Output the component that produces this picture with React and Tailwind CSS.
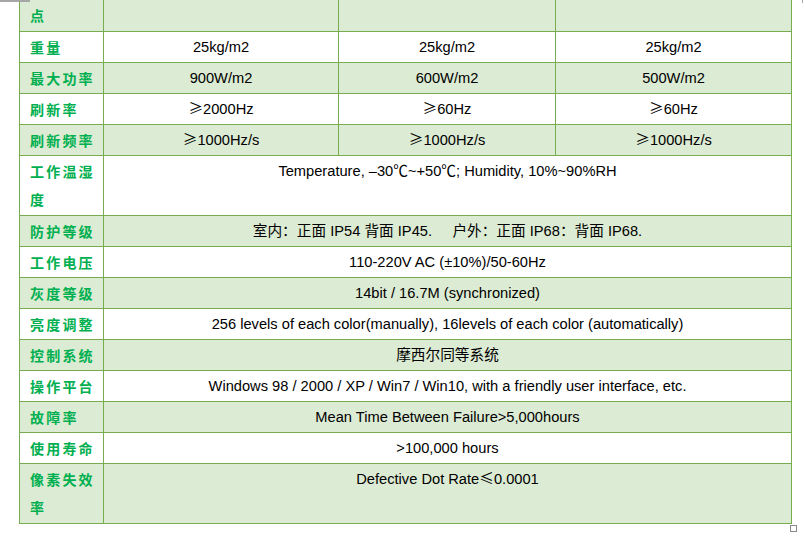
import React from "react";

const G = "bg-[#dcebd3]";
const W = "bg-white";

function Ge({ children }) {
  return <span className="leading-none font-['Noto_Sans_CJK_SC',sans-serif]">{children}</span>;
}

const rows3 = [
  ["点", ["", "", ""], G],
  ["重量", ["25kg/m2", "25kg/m2", "25kg/m2"], W],
  ["最大功率", ["900W/m2", "600W/m2", "500W/m2"], G],
  ["刷新率", [<><Ge>≥</Ge>2000Hz</>, <><Ge>≥</Ge>60Hz</>, <><Ge>≥</Ge>60Hz</>], W],
  ["刷新频率", [<><Ge>≥</Ge>1000Hz/s</>, <><Ge>≥</Ge>1000Hz/s</>, <><Ge>≥</Ge>1000Hz/s</>], G],
];

const rows1 = [
  ["工作温湿度", <>Temperature, –30<Ge>℃</Ge>~+50<Ge>℃</Ge>; Humidity, 10%~90%RH</>, W, true],
  [
    "防护等级",
    <span className="whitespace-pre">
      <Ge>室内：正面</Ge> IP54 <Ge>背面</Ge> IP45.     <Ge>户外：正面</Ge> IP68<Ge>：背面</Ge> IP68.
    </span>,
    G,
  ],
  ["工作电压", "110-220V AC (±10%)/50-60Hz", W],
  ["灰度等级", "14bit / 16.7M (synchronized)", G],
  ["亮度调整", "256 levels of each color(manually), 16levels of each color (automatically)", W],
  ["控制系统", <Ge>摩西尔同等系统</Ge>, G],
  ["操作平台", "Windows 98 / 2000 / XP / Win7 / Win10, with a friendly user interface, etc.", W],
  ["故障率", "Mean Time Between Failure>5,000hours", G],
  ["使用寿命", ">100,000 hours", W],
  ["像素失效率", <>Defective Dot Rate<Ge>≤</Ge>0.0001</>, G, true],
];

const td = "border border-[#77ad4f] align-top py-[1px] leading-[28px]";
const label =
  td + " pl-[10px] pr-[4px] text-left text-[#00b050] font-bold text-[14px] tracking-[2.2px] font-['Noto_Sans_CJK_SC',sans-serif]";
const val = td + " text-center text-black text-[14.67px] font-['Liberation_Sans',Arial,'Noto_Sans_CJK_SC',sans-serif]";

export default function App() {
  return (
    <div className="relative w-[804px] h-[537px] bg-white overflow-hidden">
      <table className="table-fixed border-collapse ml-[19px] mt-[-1px] w-[772px]">
        <colgroup>
          <col className="w-[84px]" />
          <col className="w-[235px]" />
          <col className="w-[217px]" />
          <col className="w-[236px]" />
        </colgroup>
        <tbody>
          {rows3.map(([l, vs, bg], i) => (
            <tr key={i} className={bg + (i === 0 ? " h-[32px]" : " h-[31px]")}>
              <td className={label}>{l}</td>
              {vs.map((v, j) => (
                <td key={j} className={val}>
                  {v}
                </td>
              ))}
            </tr>
          ))}
          {rows1.map(([l, v, bg, tall], i) => (
            <tr key={i} className={bg + (tall ? " h-[60px]" : "")}>
              <td className={label}>{l}</td>
              <td colSpan={3} className={val}>
                {v}
              </td>
            </tr>
          ))}
        </tbody>
      </table>
      <div className="absolute left-0 top-0 w-[30px] h-[2px] bg-[#a6a6a6]" />
      <div className="absolute left-[802px] top-0 w-[1px] h-[3px] bg-[#a6a6a6]" />
      <div className="absolute left-[790px] top-[525px] w-[7px] h-[7px] border border-[#8a8a8a] bg-white" />
    </div>
  );
}
